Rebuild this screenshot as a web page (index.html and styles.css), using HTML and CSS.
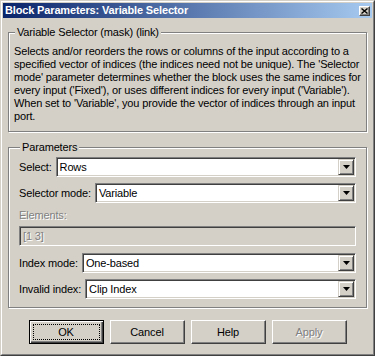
FILE: index.html
```html
<!DOCTYPE html>
<html>
<head>
<meta charset="utf-8">
<link rel="stylesheet" href="styles.css">
</head>
<body>
<div class="window">
  <div class="frame">
    <div class="titlebar">
      <span class="title">Block Parameters: Variable Selector</span>
      <span class="close"><svg width="7" height="6" viewBox="0 0 7 6"><path d="M0.5 0.5 L6.5 5.5 M6.5 0.5 L0.5 5.5" stroke="#000" stroke-width="1.4" fill="none"/></svg></span>
    </div>
    <div class="client">
      <fieldset class="group desc">
        <legend>Variable Selector (mask) (link)</legend>
        <p class="text">Selects and/or reorders the rows or columns of the input according to a<br>specified vector of indices (the indices need not be unique). The 'Selector<br>mode' parameter determines whether the block uses the same indices for<br>every input ('Fixed'), or uses different indices for every input ('Variable').<br>When set to 'Variable', you provide the vector of indices through an input<br>port.</p>
      </fieldset>
      <fieldset class="group params">
        <legend>Parameters</legend>
        <div class="row">
          <span class="label">Select:</span>
          <div class="combo"><span class="value">Rows</span><span class="drop"><svg width="7" height="4" viewBox="0 0 7 4"><path d="M0 0 H7 L3.5 4 Z" fill="#000"/></svg></span></div>
        </div>
        <div class="row">
          <span class="label">Selector mode:</span>
          <div class="combo"><span class="value">Variable</span><span class="drop"><svg width="7" height="4" viewBox="0 0 7 4"><path d="M0 0 H7 L3.5 4 Z" fill="#000"/></svg></span></div>
        </div>
        <div class="label disabled elements-label">Elements:</div>
        <div class="edit"><span class="value disabled">[1 3]</span></div>
        <div class="row">
          <span class="label">Index mode:</span>
          <div class="combo"><span class="value">One-based</span><span class="drop"><svg width="7" height="4" viewBox="0 0 7 4"><path d="M0 0 H7 L3.5 4 Z" fill="#000"/></svg></span></div>
        </div>
        <div class="row last">
          <span class="label">Invalid index:</span>
          <div class="combo"><span class="value">Clip Index</span><span class="drop"><svg width="7" height="4" viewBox="0 0 7 4"><path d="M0 0 H7 L3.5 4 Z" fill="#000"/></svg></span></div>
        </div>
      </fieldset>
      <div class="buttons">
        <button class="btn default"><span class="focus">OK</span></button>
        <button class="btn">Cancel</button>
        <button class="btn">Help</button>
        <button class="btn"><span class="disabled">Apply</span></button>
      </div>
    </div>
  </div>
</div>
</body>
</html>
```
FILE: styles.css
```css
html, body {
  margin: 0;
  padding: 0;
  background: #d4d0c8;
}
body {
  font-family: "Liberation Sans", Arial, sans-serif;
  font-size: 11px;
  letter-spacing: -0.15px;
  color: #000;
}
.window {
  width: 375px;
  height: 356px;
  box-sizing: border-box;
  border: 1px solid;
  border-color: #d4d0c8 #404040 #404040 #d4d0c8;
  background: #d4d0c8;
}
.frame {
  height: 100%;
  box-sizing: border-box;
  border: 1px solid;
  border-color: #fff #808080 #808080 #fff;
  padding: 1px;
  display: flex;
  flex-direction: column;
}
.titlebar {
  height: 15px;
  flex: none;
  display: flex;
  align-items: center;
  justify-content: space-between;
  background: linear-gradient(to right, #0a246a, #a6caf0);
  padding: 0 2px 0 2px;
}
.title {
  color: #fff;
  font-weight: bold;
  font-size: 11px;
  line-height: 13px;
  white-space: nowrap;
}
.close {
  width: 11px;
  height: 10px;
  box-sizing: border-box;
  background: #d4d0c8;
  border: 1px solid;
  border-color: #fff #404040 #404040 #fff;
  box-shadow: inset -1px -1px 0 #808080;
  display: flex;
  align-items: center;
  justify-content: center;
}
.close svg { display: block; }
.client {
  flex: 1;
  padding: 0 5px;
  display: flex;
  flex-direction: column;
}
.group {
  margin: 8px 0 0 0;
  border: 1px solid #808080;
  box-shadow: inset 1px 1px 0 #fff, 1px 1px 0 #fff;
  min-width: 0;
}
.group legend {
  padding: 0 2px;
  margin-left: 1px;
  line-height: 13px;
  background: #d4d0c8;
}
.desc {
  padding: 6px 5px 8px 5px;
}
.text {
  margin: 0;
  line-height: 13px;
  white-space: nowrap;
}
.params {
  margin-top: 9px;
  padding: 3px 10px 8px 10px;
}
.row {
  display: flex;
  align-items: center;
  gap: 4px;
  margin-bottom: 6px;
}
.row.last { margin-bottom: 0; }
.label {
  white-space: nowrap;
  line-height: 13px;
}
.elements-label {
  margin-top: 2px;
  margin-bottom: 4px;
}
.combo, .edit {
  flex: 1;
  height: 20px;
  box-sizing: border-box;
  border: 1px solid;
  border-color: #808080 #fff #fff #808080;
  box-shadow: inset 1px 1px 0 #404040, inset -1px -1px 0 #d4d0c8;
  background: #fff;
  display: flex;
  align-items: center;
  padding: 1px;
}
.edit {
  background: #d4d0c8;
  margin-bottom: 7px;
}
.value {
  flex: 1;
  padding-left: 2px;
  line-height: 13px;
  white-space: nowrap;
}
.drop {
  width: 16px;
  height: 16px;
  box-sizing: border-box;
  background: #d4d0c8;
  border: 1px solid;
  border-color: #d4d0c8 #404040 #404040 #d4d0c8;
  box-shadow: inset 1px 1px 0 #fff, inset -1px -1px 0 #808080;
  display: flex;
  align-items: center;
  justify-content: center;
}
.drop svg { display: block; }
.disabled {
  color: #808080;
  text-shadow: 1px 1px 0 #fff;
}
.buttons {
  margin-top: 12px;
  display: flex;
  justify-content: center;
  gap: 6px;
}
.btn {
  width: 75px;
  height: 24px;
  box-sizing: border-box;
  margin: 0;
  padding: 0;
  font-family: "Liberation Sans", Arial, sans-serif;
  font-size: 11px;
  letter-spacing: -0.15px;
  color: #000;
  background: #d4d0c8;
  border: 1px solid;
  border-color: #fff #404040 #404040 #fff;
  box-shadow: inset -1px -1px 0 #808080;
  display: flex;
  align-items: center;
  justify-content: center;
}
.btn.default {
  border: 1px solid #000;
  box-shadow: inset 1px 1px 0 #fff, inset -1px -1px 0 #404040, inset -2px -2px 0 #808080;
  padding: 3px;
}
.focus {
  flex: 1;
  align-self: stretch;
  border: 1px dotted #000;
  display: flex;
  align-items: center;
  justify-content: center;
}
```
